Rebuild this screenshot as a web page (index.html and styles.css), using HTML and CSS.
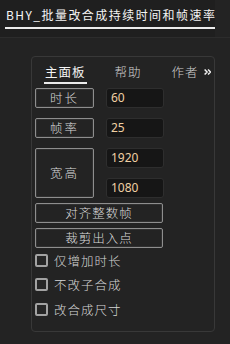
FILE: index.html
```html
<!DOCTYPE html>
<html lang="zh-CN">
  <head>
    <meta charset="UTF-8" />
    <title>BHY_批量改合成持续时间和帧速率</title>
    <link rel="stylesheet" href="styles.css">
  </head>
  <body>
    <div class="tabbar">
      <div class="tab"><span class="tab-title">BHY_批量改合成持续时间和帧速率</span></div>
    </div>

    <div class="panel">
      <div class="nav">
        <span class="nav-item active">主面板</span>
        <span class="nav-item">帮助</span>
        <span class="nav-item">作者</span>
        <svg class="more" width="12" height="10" viewBox="0 0 12 10">
          <path d="M1 1 L5 5 L1 9 M6.5 1 L10.5 5 L6.5 9" fill="none" stroke="#f2f2f2" stroke-width="2.4" />
        </svg>
      </div>

      <div class="form">
        <div class="btn">时长</div>
        <div class="field">60</div>

        <div class="btn">帧率</div>
        <div class="field">25</div>

        <div class="btn tall">宽高</div>
        <div class="field">1920</div>
        <div class="field">1080</div>
      </div>

      <div class="btn wide">对齐整数帧</div>
      <div class="btn wide">裁剪出入点</div>

      <label class="check"><span class="box"></span>仅增加时长</label>
      <label class="check"><span class="box"></span>不改子合成</label>
      <label class="check"><span class="box"></span>改合成尺寸</label>
    </div>
  </body>
</html>
```

FILE: styles.css
```css
body {
  margin: 0;
  background-color: #232323;
  font-family: "Noto Sans CJK SC", "Noto Sans", sans-serif;
  font-size: 12px;
  font-weight: 300;
  color: #d6d6d6;
}
.tabbar {
  height: 37px;
  border-bottom: 1px solid #2c2c2c;
  display: flex;
}
.tab {
  width: 215px;
  box-sizing: border-box;
  background-color: #1f1f1f;
  padding: 5px 0 0 5px;
}
.tab-title {
  display: block;
  height: 22px;
  line-height: 19px;
  padding-left: 1px;
  border-bottom: 2px solid #ececec;
  color: #f4f4f4;
  font-size: 12px;
  font-weight: 400;
  letter-spacing: 1.45px;
  white-space: nowrap;
}
.panel {
  margin: 18px 0 0 31px;
  width: 184px;
  height: 276px;
  box-sizing: border-box;
  border: 1px solid #383838;
  border-radius: 4px;
  padding: 0 3px;
}
.nav {
  display: flex;
  align-items: center;
  height: 30px;
}
.nav-item {
  line-height: 16px;
  font-size: 12.5px;
  letter-spacing: 1px;
  color: #cfcfcf;
  white-space: nowrap;
}
.nav-item:nth-child(1) {
  margin-left: 10px;
}
.nav-item:nth-child(2) {
  margin-left: 28px;
}
.nav-item:nth-child(3) {
  margin-left: 30px;
}
.nav-item.active {
  color: #f4f4f4;
  font-weight: 400;
  padding: 0 1px 2px;
  border-bottom: 2px solid #ececec;
  margin-top: 4px;
  margin-left: 9px;
}
.more {
  margin-left: 5px;
}
.form {
  margin-top: 1px;
  display: grid;
  grid-template-columns: 59px 58px;
  column-gap: 12px;
  row-gap: 10px;
}
.btn {
  box-sizing: border-box;
  height: 20px;
  line-height: 18px;
  text-align: center;
  border: 1px solid #8e8e8e;
  border-radius: 2px;
  box-shadow: inset 0 0 0 1px #303030;
  background-color: #232323;
  color: #dadada;
  font-size: 12.5px;
  letter-spacing: 2px;
}
.btn.tall {
  grid-row: span 2;
  height: 50px;
  line-height: 48px;
}
.btn.wide {
  width: 128px;
  margin-top: 5px;
  letter-spacing: 1px;
}
.field {
  box-sizing: border-box;
  height: 20px;
  line-height: 18px;
  padding-left: 4px;
  background-color: #161616;
  border: 1px solid #2e2e2e;
  border-radius: 3px;
  color: #f0d0a4;
  font-family: "Noto Sans", sans-serif;
  font-weight: 400;
  font-size: 12px;
}
.check {
  display: flex;
  align-items: center;
  height: 14px;
  margin-top: 10.5px;
  color: #d6d6d6;
  font-size: 12.5px;
  letter-spacing: 1px;
}
.form ~ .btn + .check {
  margin-top: 5px;
}
.box {
  width: 13px;
  height: 13px;
  box-sizing: border-box;
  border: 2px solid #a2a2a2;
  border-radius: 2px;
  background-color: #262626;
  margin-right: 6px;
}
```
